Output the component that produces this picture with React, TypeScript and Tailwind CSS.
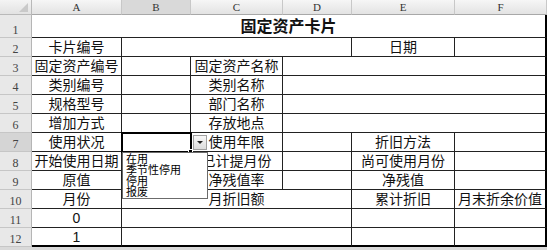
import React from 'react';

type Cell = { t?: string; span?: number };

const rows: Cell[][] = [
  [{ t: '固定资产卡片', span: 6 }],
  [{ t: '卡片编号' }, { span: 3 }, { t: '日期' }, {}],
  [{ t: '固定资产编号' }, {}, { t: '固定资产名称' }, { span: 3 }],
  [{ t: '类别编号' }, {}, { t: '类别名称' }, { span: 3 }],
  [{ t: '规格型号' }, {}, { t: '部门名称' }, { span: 3 }],
  [{ t: '增加方式' }, {}, { t: '存放地点' }, { span: 3 }],
  [{ t: '使用状况' }, {}, { t: '使用年限' }, {}, { t: '折旧方法' }, {}],
  [{ t: '开始使用日期' }, {}, { t: '已计提月份' }, {}, { t: '尚可使用月份' }, {}],
  [{ t: '原值' }, {}, { t: '净残值率' }, {}, { t: '净残值' }, {}],
  [{ t: '月份' }, { t: '月折旧额', span: 3 }, { t: '累计折旧' }, { t: '月末折余价值' }],
  [{ t: '0' }, { span: 3 }, {}, {}],
  [{ t: '1' }, { span: 3 }, {}, {}],
];

const spanClass: Record<number, string> = {
  1: 'col-span-1',
  3: 'col-span-3',
  6: 'col-span-6',
};

const cols = ['A', 'B', 'C', 'D', 'E', 'F'];

const font = { fontFamily: '"Liberation Sans", "Noto Sans CJK SC", sans-serif' };

const App = () => {
  return (
    <div className="w-[547px] h-[250px] bg-[#d9d9d9] overflow-hidden" style={font}>
      <div className="relative grid grid-cols-[32px_90px_69px_92px_69px_103px_92px] grid-rows-[15px_23px_repeat(11,19px)] bg-white">
        {/* corner */}
        <div className="relative bg-linear-to-b from-[#f4f4f4] to-[#e2e2e2] border-r border-b border-[#b9b9b9]">
          <div className="absolute right-[3px] bottom-[2px] w-0 h-0 border-l-[9px] border-l-transparent border-b-[9px] border-b-[#c9c9c9]" />
        </div>
        {cols.map((c) => (
          <div
            key={c}
            className={
              'flex items-center justify-center text-[11px] leading-none text-[#333] border-r border-b border-r-[#c8c8c8] border-b-[#a8a8a8] ' +
              (c === 'B' ? 'bg-[#d9d9d9]' : 'bg-linear-to-b from-[#f6f6f6] to-[#e3e3e3]')
            }
            style={{ fontFamily: '"Liberation Serif", serif' }}
          >
            {c}
          </div>
        ))}

        {rows.map((row, ri) => {
          let col = 0;
          return (
            <React.Fragment key={ri}>
              <div
                className={
                  'flex items-end justify-center pb-[1px] text-[12px] leading-none text-[#444] border-r border-b border-r-[#b5b5b5] border-b-[#c6c6c6] ' +
                  (ri === 6 ? 'bg-[#d5d5d5]' : 'bg-[#e8e8e8]')
                }
                style={{ fontFamily: '"Liberation Serif", serif' }}
              >
                {ri + 1}
              </div>
              {row.map((cell, ci) => {
                const span = cell.span ?? 1;
                col += span;
                const last = col === 6;
                const cls = [
                  spanClass[span],
                  'flex items-center justify-center whitespace-nowrap overflow-hidden text-[#111] leading-none',
                  ri === 0 ? 'text-[16px] font-bold pt-[2px]' : 'text-[14px]',
                  'border-b border-b-[#222]',
                  ri === rows.length - 1 ? 'border-b-2 border-b-black' : '',
                  last ? 'border-r-2 border-r-black' : ri === 0 ? '' : 'border-r border-r-[#222]',
                ].join(' ');
                return (
                  <div key={ci} className={cls}>
                    {cell.t}
                  </div>
                );
              })}
            </React.Fragment>
          );
        })}

        {/* selected cell B7 */}
        <div className="absolute left-[121px] top-[132px] w-[71px] h-[21px] border-2 border-black pointer-events-none">
          <div className="absolute -right-[3px] -bottom-[3px] w-[5px] h-[5px] bg-black border border-white" />
        </div>

        {/* dropdown arrow */}
        <div className="absolute left-[193px] top-[135px] w-[14px] h-[15px] bg-linear-to-b from-[#f8f8f8] to-[#dcdcdc] border border-[#a0a0a0] flex items-center justify-center">
          <div className="w-0 h-0 border-l-[3px] border-r-[3px] border-t-[3px] border-l-transparent border-r-transparent border-t-[#222]" />
        </div>

        {/* dropdown list */}
        <div className="absolute left-[122px] top-[152px] w-[86px] h-[47px] bg-white border border-[#6b6b6b] pl-[3px] pt-[1px] text-[11px] leading-[11px] text-black flex flex-col">
          <div>在用</div>
          <div>季节性停用</div>
          <div>停用</div>
          <div>报废</div>
        </div>
      </div>
    </div>
  );
};

export default App;
